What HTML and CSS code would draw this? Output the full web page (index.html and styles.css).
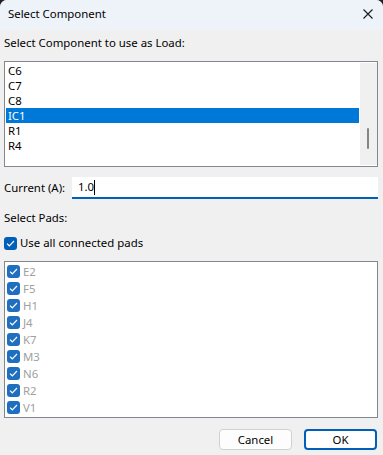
FILE: index.html
```html
<!DOCTYPE html>
<html lang="en">
<head>
    <meta charset="UTF-8">
    <title>Select Component</title>
    <link rel="stylesheet" href="styles.css">
</head>
<body>
    <div class="window">
        <div class="titlebar">
            <span class="title">Select Component</span>
            <svg class="close" width="10" height="10" viewBox="0 0 10 10">
                <path d="M0.5 0.5 L9.5 9.5 M9.5 0.5 L0.5 9.5" stroke="#1a1a1a" stroke-width="1.1" fill="none"/>
            </svg>
        </div>
        <div class="content">
            <div class="label first">Select Component to use as Load:</div>
            <div class="listbox">
                <div class="items">
                    <div class="item">C6</div>
                    <div class="item">C7</div>
                    <div class="item">C8</div>
                    <div class="item selected">IC1</div>
                    <div class="item">R1</div>
                    <div class="item">R4</div>
                </div>
                <div class="scrollbar"><div class="thumb"></div></div>
            </div>
            <div class="current-row">
                <span class="label">Current (A):</span>
                <div class="input"><span>1.0</span><span class="caret"></span></div>
            </div>
            <div class="label pads-label">Select Pads:</div>
            <label class="check-row">
                <span class="box"><svg width="9" height="7" viewBox="0 0 9 7"><path d="M1 3.6 L3.3 5.8 L8 1" stroke="#fff" stroke-width="1.2" fill="none"/></svg></span>
                <span>Use all connected pads</span>
            </label>
            <div class="pads" id="pads"></div>
            <div class="buttons">
                <button class="btn">Cancel</button>
                <button class="btn default">OK</button>
            </div>
        </div>
    </div>

    <script>
        const pads = ['E2', 'F5', 'H1', 'J4', 'K7', 'M3', 'N6', 'R2', 'V1'];
        const list = document.getElementById('pads');
        pads.forEach(name => {
            const row = document.createElement('div');
            row.className = 'pad';
            row.innerHTML = '<span class="box"><svg width="9" height="7" viewBox="0 0 9 7"><path d="M1 3.6 L3.3 5.8 L8 1" stroke="#fff" stroke-width="1.2" fill="none"/></svg></span><span>' + name + '</span>';
            list.appendChild(row);
        });
    </script>
</body>
</html>
```

FILE: styles.css
```css
html {
    background: #1f1f24;
}
body {
    margin: 0;
    font-family: 'Noto Sans', 'Liberation Sans', sans-serif;
    font-size: 11.4px;
    color: #000;
}
.window {
    width: 383px;
    height: 455px;
    background: #f0f0f0;
    border-radius: 7px 7px 0 0;
    overflow: hidden;
}
.titlebar {
    height: 30px;
    background: #eef2f9;
    display: flex;
    align-items: center;
    justify-content: space-between;
    padding: 0 10px 2px 8px;
    box-sizing: border-box;
}
.title {
    line-height: 16px;
}
.close {
    display: block;
}
.content {
    padding: 0 5px 0 4px;
}
.label {
    line-height: 16px;
}
.first {
    margin-top: 5px;
}
.listbox {
    margin-top: 10px;
    height: 106px;
    border: 1px solid #828790;
    box-sizing: border-box;
    background: #fff;
    display: flex;
    width: 374px;
}
.items {
    flex: 1;
    padding: 1px 1px 0 1px;
}
.item {
    height: 15px;
    line-height: 14px;
    padding-left: 2px;
    display: flex;
    align-items: center;
}
.selected {
    background: #0078d7;
    color: #fff;
}
.scrollbar {
    width: 17px;
    background: #f0f0f0;
    margin: 1px 0;
    position: relative;
}
.thumb {
    position: absolute;
    left: 7px;
    top: 65px;
    width: 2px;
    height: 21px;
    background: #858585;
    border-radius: 1px;
}
.current-row {
    margin-top: 10px;
    display: flex;
    align-items: center;
}
.current-row .label {
    width: 68px;
}
.input {
    width: 306px;
    height: 22px;
    background: #fff;
    border-bottom: 2px solid #005fb8;
    box-sizing: border-box;
    padding-left: 6px;
    display: flex;
    align-items: center;
    line-height: 16px;
}
.caret {
    display: inline-block;
    width: 1px;
    height: 15px;
    background: #000;
}
.pads-label {
    margin-top: 11px;
}
.check-row {
    margin-top: 9px;
    display: flex;
    align-items: center;
    gap: 3px;
    line-height: 16px;
}
.box {
    width: 13px;
    height: 13px;
    border-radius: 3px;
    background: #005fb8;
    display: flex;
    align-items: center;
    justify-content: center;
    flex-shrink: 0;
}
.box svg {
    display: block;
}
.pads {
    margin-top: 10px;
    width: 374px;
    height: 157px;
    border: 1px solid #828790;
    box-sizing: border-box;
    background: #fff;
    padding: 1px 2px;
}
.pad {
    height: 17px;
    display: flex;
    align-items: center;
    gap: 3px;
    color: #a0a0a0;
    line-height: 14px;
}
.pad .box {
    background: #1f6fc0;
}
.buttons {
    margin-top: 11px;
    display: flex;
    justify-content: flex-end;
    gap: 12px;
    padding-right: 1px;
}
.btn {
    width: 73px;
    height: 21px;
    font-family: inherit;
    font-size: 11.4px;
    background: #fdfdfd;
    border: 1px solid #d0d0d0;
    border-radius: 4px;
    color: #000;
    padding: 0;
}
.default {
    border: 2px solid #005fb8;
    background: #fff;
}
```
